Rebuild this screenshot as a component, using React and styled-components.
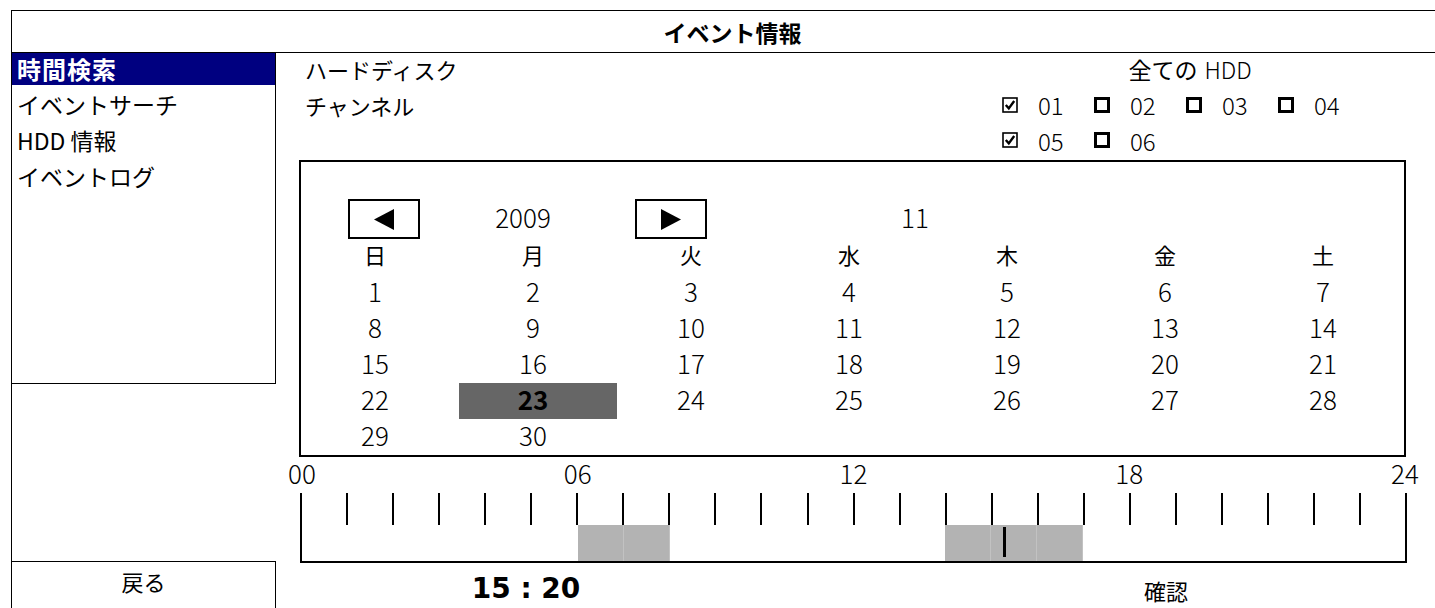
import styled, { createGlobalStyle } from "styled-components";

const GlobalStyle = createGlobalStyle`
  html, body {
    margin: 0;
    padding: 0;
    background: #fff;
    overflow: hidden;
  }
  body {
    font-family: "Noto Sans CJK JP", "Noto Sans", sans-serif;
    color: #000;
  }
`;

const HOUR_BLOCKS = [
  { start: 6, end: 8 },
  { start: 14, end: 17 },
];
const CURSOR = 15 + 20 / 60;
const WEEKDAYS = ["日", "月", "火", "水", "木", "金", "土"];
const FIRST_DAY = 0;
const DAYS = 30;
const SELECTED_DAY = 23;
const CHANNELS = [
  [
    { no: "01", on: true },
    { no: "02", on: false },
    { no: "03", on: false },
    { no: "04", on: false },
  ],
  [
    { no: "05", on: true },
    { no: "06", on: false },
  ],
];

const Frame = styled.div`
  margin: 10px 0 0 11px;
  width: 1441px;
  height: 598px;
  border-top: 1px solid #000;
  border-left: 1px solid #000;
  display: flex;
  flex-direction: column;
`;

const TitleBar = styled.div`
  flex-shrink: 0;
  height: 41px;
  border-bottom: 1px solid #000;
  display: flex;
  align-items: center;
  justify-content: center;
  font-size: 23px;
  font-weight: 700;
`;

const Body = styled.div`
  flex: 1;
  min-height: 0;
  display: flex;
`;

const Sidebar = styled.div`
  flex-shrink: 0;
  width: 264px;
  display: flex;
  flex-direction: column;
  justify-content: space-between;
`;

const Menu = styled.ul`
  list-style: none;
  margin: 0;
  padding: 0;
  height: 330px;
  border-right: 1px solid #000;
  border-bottom: 1px solid #000;
`;

const MenuItem = styled.li`
  height: ${(p) => (p.$active ? "32px" : "36px")};
  line-height: ${(p) => (p.$active ? "31px" : "32px")};
  margin-bottom: ${(p) => (p.$active ? "3px" : "0")};
  padding-left: 5px;
  font-size: ${(p) => (p.$active ? "24px" : "23px")};
  letter-spacing: ${(p) => (p.$active ? "1px" : "0")};
  white-space: nowrap;
  font-weight: ${(p) => (p.$active ? 700 : 400)};
  color: ${(p) => (p.$active ? "#fff" : "#000")};
  background: ${(p) => (p.$active ? "#000080" : "transparent")};
`;

const BackButton = styled.div`
  height: 47px;
  border-top: 1px solid #000;
  border-right: 1px solid #000;
  line-height: 38px;
  text-align: center;
  font-size: 22px;
`;

const Main = styled.div`
  flex: 1;
  min-width: 0;
  padding-left: 23px;
  display: flex;
  flex-direction: column;
`;

const InfoGrid = styled.div`
  display: grid;
  grid-template-columns: 703px 376px;
  grid-template-rows: 36px 36px 35px;
  font-size: 22px;
`;

const Label = styled.div`
  padding: 0 0 5px 6px;
  display: flex;
  align-items: center;
`;

const Value = styled.div`
  padding-bottom: 5px;
  display: flex;
  align-items: center;
  justify-content: ${(p) => (p.$center ? "center" : "flex-start")};
  font-size: ${(p) => (p.$center ? "23px" : "22px")};
`;

const Light = styled.span`
  font-weight: 300;
  margin-left: 7px;
`;

const Check = styled.div`
  width: 92px;
  display: flex;
  align-items: center;
  gap: 20px;
  font-size: 24px;
  font-weight: 300;

  svg {
    flex-shrink: 0;
  }
`;

const Calendar = styled.div`
  flex-shrink: 0;
  width: 1103px;
  height: 256px;
  border: 2px solid #000;
  padding-top: 37px;
  display: flex;
  flex-direction: column;
`;

const NavRow = styled.div`
  height: 40px;
  display: flex;
  align-items: center;
  padding-left: 47px;
`;

const NavButton = styled.div`
  width: 72px;
  height: 40px;
  box-sizing: border-box;
  border: 2px solid #000;
  display: flex;
  align-items: center;
  justify-content: center;
`;

const NavValue = styled.div`
  width: ${(p) => p.$w}px;
  padding: 0 ${(p) => p.$shift || 0}px 6px 0;
  box-sizing: border-box;
  text-align: center;
  font-size: 26px;
  font-weight: 300;
`;

const DayGrid = styled.div`
  display: grid;
  grid-template-columns: repeat(7, 158px);
  grid-auto-rows: 36px;
`;

const DayCell = styled.div`
  display: flex;
  align-items: center;
  justify-content: center;
  padding: 0 10px ${(p) => (p.$head ? "7px" : "6px")} 0;
  font-size: ${(p) => (p.$head ? "22px" : "26px")};
  font-weight: ${(p) => (p.$selected ? 700 : p.$head ? 400 : 300)};
  background: ${(p) => (p.$selected ? "#666" : "transparent")};
`;

const Scale = styled.div`
  flex-shrink: 0;
  position: relative;
  height: 36px;
  width: 1103px;
  margin-left: 3px;
`;

const ScaleLabel = styled.span`
  position: absolute;
  top: 1px;
  transform: translateX(-50%);
  font-size: 26px;
  font-weight: 300;
  line-height: 30px;
`;

const Track = styled.div`
  flex-shrink: 0;
  position: relative;
  width: 1103px;
  height: 68px;
  margin-left: 1px;
  border-left: 2px solid #000;
  border-right: 2px solid #000;
  border-bottom: 2px solid #000;
`;

const Ticks = styled.div`
  display: flex;
  height: 32px;
`;

const Tick = styled.div`
  flex: 1;
  border-right: ${(p) => (p.$last ? "none" : "2px solid #000")};
`;

const Block = styled.div`
  position: absolute;
  top: 32px;
  bottom: 0;
  background: #b3b3b3;
  border-right: 1px solid #c2c2c2;
  box-sizing: border-box;
`;

const Cursor = styled.div`
  position: absolute;
  top: 34px;
  height: 30px;
  width: 3px;
  margin-left: -4px;
  background: #000;
`;

const Footer = styled.div`
  display: grid;
  grid-template-columns: 454px 1fr;
  padding-top: 8px;
`;

const Clock = styled.div`
  text-align: center;
  font-family: "DejaVu Sans", "Noto Sans", sans-serif;
  font-size: 28px;
  font-weight: 700;
  line-height: 36px;
`;

const Confirm = styled.div`
  padding-left: 126px;
  text-align: center;
  font-size: 22px;
  line-height: 38px;
`;

const Box = ({ checked }) => (
  <svg width="16" height="16" viewBox="0 0 16 16">
    {checked ? (
      <>
        <rect x="1" y="1" width="14" height="14" fill="none" stroke="#000" strokeWidth="1.6" />
        <path d="M3.8 8 L6.8 11.4 L12.2 4" fill="none" stroke="#000" strokeWidth="2.4" />
      </>
    ) : (
      <rect x="1.5" y="1.5" width="13" height="13" fill="none" stroke="#000" strokeWidth="3" />
    )}
  </svg>
);

const Arrow = ({ dir }) => (
  <svg width="20" height="21" viewBox="0 0 20 21">
    <polygon points={dir === "left" ? "20,0 20,21 0,10.5" : "0,0 0,21 20,10.5"} fill="#000" />
  </svg>
);

const pct = (h) => `${(h / 24) * 100}%`;

export default function App() {
  const cells = [];
  for (let i = 0; i < FIRST_DAY; i++) cells.push(null);
  for (let d = 1; d <= DAYS; d++) cells.push(d);

  const segments = [];
  HOUR_BLOCKS.forEach((b) => {
    for (let h = b.start; h < b.end; h++) segments.push(h);
  });

  return (
    <>
      <GlobalStyle />
      <Frame>
        <TitleBar>イベント情報</TitleBar>
        <Body>
          <Sidebar>
            <Menu>
              <MenuItem $active>時間検索</MenuItem>
              <MenuItem>イベントサーチ</MenuItem>
              <MenuItem>HDD 情報</MenuItem>
              <MenuItem>イベントログ</MenuItem>
            </Menu>
            <BackButton>戻る</BackButton>
          </Sidebar>
          <Main>
            <InfoGrid>
              <Label>ハードディスク</Label>
              <Value $center>
                全ての<Light>HDD</Light>
              </Value>
              <Label>チャンネル</Label>
              <Value>
                {CHANNELS[0].map((c) => (
                  <Check key={c.no}>
                    <Box checked={c.on} />
                    {c.no}
                  </Check>
                ))}
              </Value>
              <Label />
              <Value>
                {CHANNELS[1].map((c) => (
                  <Check key={c.no}>
                    <Box checked={c.on} />
                    {c.no}
                  </Check>
                ))}
              </Value>
            </InfoGrid>

            <Calendar>
              <NavRow>
                <NavButton>
                  <Arrow dir="left" />
                </NavButton>
                <NavValue $w={215} $shift={9}>2009</NavValue>
                <NavButton>
                  <Arrow dir="right" />
                </NavButton>
                <NavValue $w={416}>11</NavValue>
              </NavRow>
              <DayGrid>
                {WEEKDAYS.map((w) => (
                  <DayCell key={w} $head>
                    {w}
                  </DayCell>
                ))}
                {cells.map((d, i) => (
                  <DayCell key={i} $selected={d === SELECTED_DAY}>
                    {d}
                  </DayCell>
                ))}
              </DayGrid>
            </Calendar>

            <Scale>
              {["00", "06", "12", "18", "24"].map((l, i) => (
                <ScaleLabel key={l} style={{ left: pct(i * 6) }}>
                  {l}
                </ScaleLabel>
              ))}
            </Scale>
            <Track>
              <Ticks>
                {Array.from({ length: 24 }, (_, i) => (
                  <Tick key={i} $last={i === 23} />
                ))}
              </Ticks>
              {segments.map((h) => (
                <Block key={h} style={{ left: pct(h), width: pct(1) }} />
              ))}
              <Cursor style={{ left: pct(CURSOR) }} />
            </Track>

            <Footer>
              <Clock>15 : 20</Clock>
              <Confirm>確認</Confirm>
            </Footer>
          </Main>
        </Body>
      </Frame>
    </>
  );
}
